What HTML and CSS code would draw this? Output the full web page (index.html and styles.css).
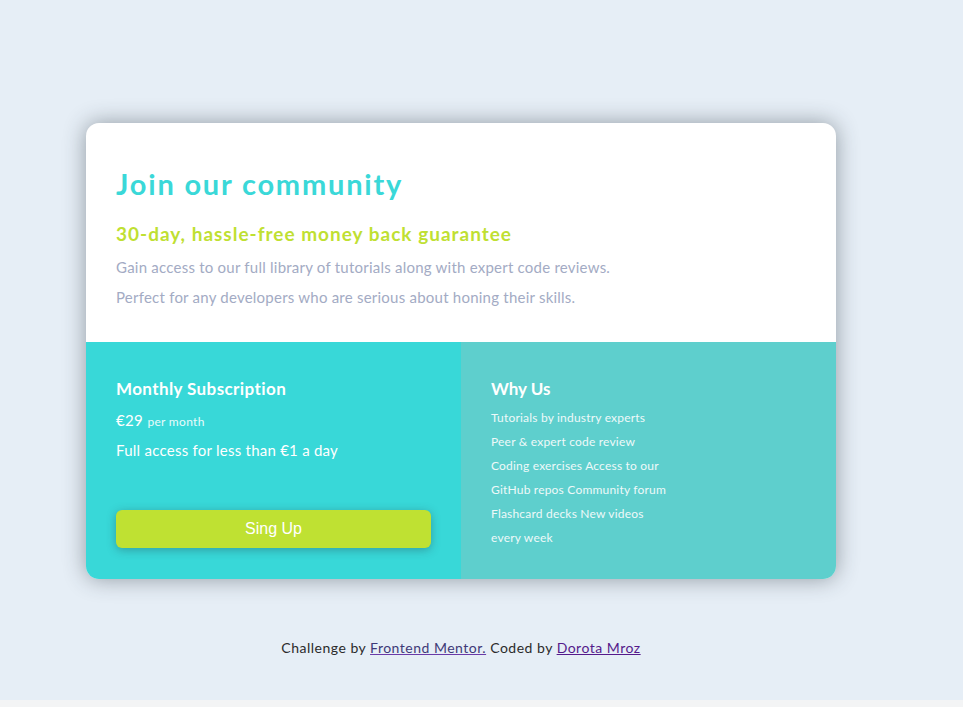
FILE: index.html
```html
<!DOCTYPE html>
<html lang="en">
<head>
<meta charset="utf-8">
<title>Single price grid</title>
<link rel="stylesheet" href="styles.css">
</head>
<body>
<div class="page">
  <main class="card">
    <section class="intro">
      <h1 class="title">Join our community</h1>
      <h2 class="guarantee">30-day, hassle-free money back guarantee</h2>
      <p class="text">Gain access to our full library of tutorials along with expert code reviews.</p>
      <p class="text">Perfect for any developers who are serious about honing their skills.</p>
    </section>
    <div class="bottom">
      <section class="subscription">
        <h3 class="heading heading-wide">Monthly Subscription</h3>
        <p class="price"><span class="amount">€29</span> <span class="per">per month</span></p>
        <p class="access">Full access for less than €1 a day</p>
        <button class="signup">Sing Up</button>
      </section>
      <section class="why">
        <h3 class="heading">Why Us</h3>
        <ul class="reasons">
          <li>Tutorials by industry experts</li>
          <li>Peer &amp; expert code review</li>
          <li>Coding exercises Access to our</li>
          <li>GitHub repos Community forum</li>
          <li>Flashcard decks New videos</li>
          <li>every week</li>
        </ul>
      </section>
    </div>
  </main>
  <footer class="attribution">
    Challenge by <a class="link link-first" href="#">Frontend Mentor.</a> Coded by <a class="link" href="#">Dorota Mroz</a>
  </footer>
</div>
</body>
</html>
```

FILE: styles.css
```css
html {
  background: #f3f4f5;
}
body {
  margin: 0;
  font-family: "Lato", "Noto Sans", sans-serif;
}
.page {
  height: 700px;
  background: #e6eef6;
  padding: 123px 0 0 86px;
  box-sizing: border-box;
  width: 963px;
}
.card {
  width: 750px;
  border-radius: 13px;
  overflow: hidden;
  background: #fff;
  box-shadow: 0 0 22px rgba(40, 50, 60, 0.45);
}
.intro {
  padding: 45px 30px 34px;
}
.title {
  margin: 0;
  font-size: 29px;
  line-height: 32px;
  font-weight: 700;
  letter-spacing: 1.8px;
  color: #3ad8d8;
}
.guarantee {
  margin: 22px 0 10px;
  font-size: 19px;
  line-height: 24px;
  font-weight: 700;
  letter-spacing: 1px;
  color: #bfe032;
}
.text {
  margin: 0;
  font-size: 15px;
  line-height: 22px;
  letter-spacing: 0.23px;
  color: #a3abc4;
}
.text + .text {
  margin-top: 8px;
}
.bottom {
  display: grid;
  grid-template-columns: 375px 375px;
  height: 237px;
}
.subscription {
  background: #38d8d8;
  padding: 36px 30px 0;
  display: flex;
  flex-direction: column;
  color: #fff;
}
.why {
  background: #5ecfcd;
  padding: 36px 30px 0;
  color: #fff;
}
.heading {
  margin: 0;
  font-size: 17px;
  line-height: 22px;
  font-weight: 700;
}
.heading-wide {
  letter-spacing: 0.4px;
}
.price {
  margin: 10px 0 0;
  line-height: 20px;
  letter-spacing: 0.3px;
}
.amount {
  font-size: 15px;
}
.per {
  font-size: 12px;
  color: #e8fbfb;
}
.access {
  margin: 8px 0 0;
  font-size: 15px;
  line-height: 20px;
  letter-spacing: 0.25px;
}
.signup {
  margin-top: 50px;
  width: 315px;
  height: 38px;
  border: none;
  border-radius: 6px;
  background: #bfe132;
  color: #fff;
  font-family: "Liberation Sans", Arial, sans-serif;
  font-size: 16px;
  box-shadow: 0 2px 10px rgba(40, 70, 80, 0.4);
}
.reasons {
  list-style: none;
  margin: 6px 0 0;
  padding: 0;
  font-size: 12px;
  line-height: 24px;
  letter-spacing: 0.2px;
  color: #eef9f9;
}
.attribution {
  width: 750px;
  margin-top: 59px;
  text-align: center;
  font-size: 14px;
  line-height: 20px;
  letter-spacing: 0.5px;
  color: #2b2b2b;
}
.link {
  color: #551a8b;
}
.link-first {
  color: #3e3a78;
  text-decoration-color: #6a3aa8;
}
```
